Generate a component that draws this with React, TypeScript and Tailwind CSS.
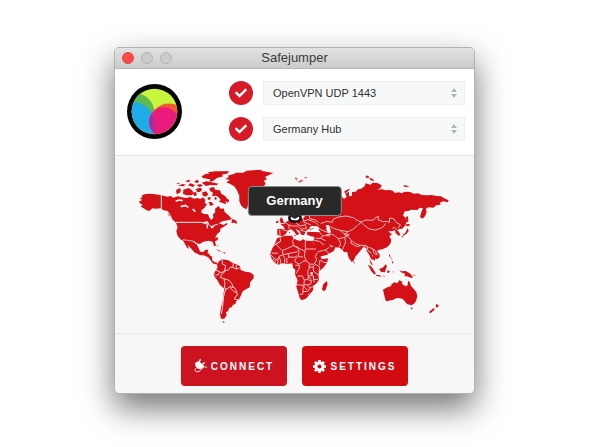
import { useState } from 'react';
import { FaCheck } from 'react-icons/fa';

function Logo() {
  return (
    <svg viewBox="80 147 164 164" className="size-[55px] shrink-0" role="img" aria-label="Safejumper">
      <defs>
        <clipPath id="disc"><circle cx="162" cy="229" r="68" /></clipPath>
        <clipPath id="blue"><circle cx="93" cy="270" r="71" /></clipPath>
      </defs>
      <circle cx="162" cy="229" r="82" fill="#050505" />
      <g clipPath="url(#disc)">
        <rect x="80" y="147" width="164" height="164" fill="#c9f53d" />
        <circle cx="105" cy="231" r="56" fill="#5fb94f" />
        <circle cx="205" cy="262" r="57" fill="#f0592b" />
        <circle cx="93" cy="270" r="71" fill="#20aceb" />
        <circle cx="190" cy="260" r="44" fill="#ea1b7c" />
        <circle cx="190" cy="260" r="44" fill="#b02a9c" clipPath="url(#blue)" />
      </g>
    </svg>
  );
}

function PlugIcon() {
  return (
    <svg viewBox="0 0 39 42" className="h-[14px] w-[13px]" fill="none" stroke="currentColor" aria-hidden="true">
      <path d="M4 11 L14 6 L30 20 C29 27 20 32 12 29 C4 25 2 17 4 11 Z" fill="currentColor" stroke="none" />
      <path d="M15 10 L19 2 M23 17 L31 11" strokeWidth="4" strokeLinecap="round" />
      <path d="M7 27 C0 33 4 40 13 38 C23 35 24 24 31 23 C34 23 34 26 39 25" strokeWidth="3" />
    </svg>
  );
}

function GearIcon() {
  return (
    <svg viewBox="0 0 40 40" className="size-[13px]" fill="none" stroke="currentColor" aria-hidden="true">
      <circle cx="20" cy="20" r="11" strokeWidth="9" />
      <path d="M20 0 V8 M20 32 V40 M0 20 H8 M32 20 H40 M6 6 L12 12 M28 28 L34 34 M34 6 L28 12 M12 28 L6 34" strokeWidth="8" />
    </svg>
  );
}

function WorldMap() {
  return (
    <svg viewBox="345 468 1077 531" className="block w-full" role="img" aria-label="World map">
      {/* North America and Greenland */}
      <g transform="translate(390 480)" fill="#d41116">
        <path d="M28 124 L37 120 29 115 37 112 36 106 46 102 62 101 76 103 95 106 112 110 122 108 130 113 143 109 156 112 168 114 181 111 192 116 202 114 211 117 219 112 226 119 224 129 231 132 224 143 215 150 214 158 223 162 234 163 239 174 244 180 250 173 249 163 256 157 255 147 265 138 273 147 281 145 284 156 291 162 300 170 306 178 293 181 277 184 265 191 273 191 280 195 292 188 291 194 280 201 271 206 271 214 261 223 255 234 264 231 263 240 255 244 258 257 252 258 248 245 235 242 220 245 209 252 201 250 191 243 178 243 166 243 154 240 143 228 139 214 143 202 138 188 127 178 121 164 113 153 101 151 92 145 77 146 67 145 58 153 50 151 40 144 32 140 38 134 29 130 Z" />
        <path d="M158 239 L173 242 188 244 200 253 207 266 210 275 220 276 226 269 235 269 231 279 238 281 240 287 247 290 246 300 254 307 263 308 260 312 250 311 241 300 235 292 221 286 211 286 193 277 182 264 172 254 177 266 171 263 Z" />
        <path d="M289 67 L300 60 286 57 297 51 292 47 309 43 319 38 340 38 350 32 371 31 390 29 400 34 430 39 417 45 405 51 411 57 402 62 407 71 399 82 385 97 365 111 357 130 350 147 342 145 333 136 328 124 328 107 321 91 312 78 299 71 Z" />
        <path d="M221 55 L214 50 225 43 239 40 233 37 256 34 277 34 298 34 291 41 275 44 280 49 261 54 248 64 238 65 241 58 Z M215 68 L229 64 252 68 266 71 259 76 240 75 228 78 Z M238 84 L251 81 257 90 270 91 274 101 286 109 292 117 298 120 294 128 286 123 289 133 276 128 267 125 272 119 265 111 257 107 246 109 249 98 240 93 Z M160 89 L176 84 186 91 191 99 185 106 170 106 159 102 Z M138 91 L149 84 153 91 150 98 140 103 Z M197 87 L211 83 217 89 210 96 202 97 Z M217 97 L229 94 235 104 226 110 217 106 Z M144 77 L158 72 168 74 160 79 Z M174 76 L181 70 195 75 189 81 Z M200 75 L211 72 219 77 208 81 Z M166 63 L178 59 181 64 173 67 Z M193 64 L203 59 207 66 199 70 Z M188 99 L197 95 201 105 193 109 Z M236 125 L246 127 251 135 240 137 Z M307 177 L319 182 322 191 312 188 304 189 Z M232 113 L241 110 242 118 235 120 Z M138 71 L146 68 149 72 Z M252 115 L257 111 261 116 257 120 Z" />
        <path d="M257 268 L267 271 277 275 266 273 Z M278 277 L288 278 283 281 Z M261 255 L265 257 263 260 Z M239 292 L243 294 242 298 Z M114 160 L120 165 118 170 Z M229 275 L234 273 233 279 Z" />
        <g fill="none" stroke="#f7f7f7" strokeWidth="3">
          <path d="M94 105 V146 M137 187 H215 L223 190 235 193 243 200 252 196 263 193" />
          <path d="M220 188 L232 186 236 193 M232 194 V205 M243 204 L252 200" strokeWidth="4" />
          <path d="M137 124 L147 120 158 122 M152 140 L166 136 175 142 M188 147 L196 155" strokeWidth="5" />
          <path d="M158 239 L173 241 188 243 200 251" strokeWidth="2" />
        </g>
      </g>

      {/* South America */}
      <g transform="translate(480 705)" fill="#d41116">
        <path d="M164 82 L173 86 177 79 187 73 205 76 218 84 229 88 240 94 242 105 256 110 269 112 281 119 281 130 271 141 269 157 258 163 248 169 242 183 237 193 229 198 226 207 218 210 216 216 207 219 205 228 198 232 200 241 193 251 183 251 180 238 183 218 188 200 190 180 193 161 180 150 172 136 162 122 164 111 172 100 172 91 Z" />
        <path d="M187 258 L195 261 190 263 Z" />
        <g fill="none" stroke="#f7f7f7" strokeWidth="2.5">
          <path d="M187 74 L187 87 197 92 194 107 205 105 212 96 219 98 220 85 M220 98 L228 102 239 99 M229 89 V101 M165 105 L177 109 183 113 195 108 M166 121 L176 119 178 112" />
          <path d="M195 109 L184 120 181 127 192 131 207 136 216 147 219 156 225 160 230 170 232 181 227 184 223 192 235 195 M192 132 L195 145 193 158 201 163 208 155 219 157 M210 158 L222 170 230 172 M197 162 L191 184 188 214 184 237" />
        </g>
      </g>

      {/* Europe and Asia */}
      <g transform="translate(1020 480)" fill="#d41116">
        <path d="M-188 207 L-177 206 -165 208 -170 199 -179 193 -167 191 -160 185 -151 179 -143 174 -141 165 -80 155 -70 110 -40 112 -30 104 5 109 12 117 20 111 16 100 27 96 27 109 36 108 36 96 47 95 54 88 64 86 74 79 77 70 91 74 98 68 112 69 125 76 121 85 112 89 127 88 136 91 148 90 158 92 165 99 177 97 185 100 194 95 211 96 221 101 233 100 246 105 262 106 275 105 289 108 303 109 312 115 326 121 323 127 311 124 301 127 301 134 289 136 280 143 265 142 257 147 260 156 255 169 247 176 240 170 245 154 249 145 239 143 232 150 213 149 205 153 194 154 189 167 197 173 201 183 196 196 187 206 177 207 173 211 181 223 176 228 167 219 165 211 154 214 145 214 151 220 157 222 148 229 154 240 151 251 141 262 127 268 118 269 111 273 119 284 119 292 110 298 103 291 96 284 97 301 92 295 87 283 80 274 79 264 70 261 65 268 55 280 46 290 41 302 35 306 26 293 21 275 13 277 7 270 0 264 -20 260 -34 251 -43 240 -32 253 -27 261 -14 261 -18 272 -38 284 -61 290 -69 277 -76 261 -81 244 -75 231 -87 229 -99 224 -98 215 -78 216 -59 217 -65 207 -75 204 -88 209 -95 207 -101 212 -108 225 -115 225 -122 213 -134 205 -127 216 -121 221 -130 226 -137 216 -147 207 -157 212 -163 222 -172 229 -178 227 -188 224 Z" />
        <path d="M-181 177 L-174 172 -170 184 -166 189 -178 190 Z M-191 183 L-184 182 -186 189 -192 189 Z M-140 226 L-132 226 -134 229 Z M-80 231 L-72 229 -76 233 Z M-153 216 L-150 216 -150 223 Z M198 170 L204 169 205 187 200 186 Z M197 193 L209 192 208 198 200 199 Z M203 204 L206 213 200 221 192 226 187 229 190 223 196 219 Z M184 228 L189 228 187 233 Z M143 252 L148 250 146 258 Z M76 47 L85 47 88 52 80 55 Z M87 53 L99 57 103 63 92 61 Z M190 75 L202 77 208 80 194 81 Z M12 95 L21 89 31 86 25 93 16 100 Z M39 305 L44 306 43 311 Z" />
        <path d="M-135 52 L-127 55 -131 60 -124 65 -117 59 -109 61 -116 65 -122 68 -133 59 Z M-108 51 L-98 52 -103 56 Z" opacity=".75" />
        <g fill="none" stroke="#f4d8d8" strokeWidth="2.5" strokeLinejoin="round">
          <path d="M-58 191 L-40 184 -23 187 -20 177 -4 171 18 168 40 173 51 181 63 186 78 180 90 181 101 180 106 173 116 169 114 179 128 185 139 184 148 187 149 174 161 176 168 187 181 194 174 205" />
          <path d="M63 187 L73 196 88 207 107 210 122 205 130 200 137 190 M63 187 L52 197 40 207 24 215 13 224 M24 215 L0 211 -20 205 -28 200 -40 204 -41 211 M0 211 L12 221 28 224 14 232 -5 236 -22 223 -41 224 M13 224 L25 231 34 241 43 249 60 256 75 256 85 262 M-5 236 L2 252 -4 263 M14 232 L17 246 7 269 M34 241 L33 250 49 259 60 258 M75 256 L70 263 M80 259 L84 272 96 280 M86 262 L98 266 106 272 112 286 M98 266 L103 281 110 284 M157 205 L164 202 172 211" />
          <path d="M-61 217 L-52 227 -58 235 -73 235 M-58 235 L-43 242 M-52 227 L-39 227 -29 228 M-78 241 L-62 244 -48 255 M-67 275 L-44 270 -38 275 -34 282 M-44 270 L-32 262 M-60 208 L-40 216 -27 216" />
          <path d="M-181 209 L-180 225 M-174 209 L-157 213 M-163 189 L-153 195 -153 207 M-153 195 L-143 198 -127 198 M-128 175 L-130 191 -117 198 -104 194 M-127 198 L-117 207 -104 206 M-104 194 L-101 208 M-110 176 L-108 187 -97 191 -87 194 M-109 183 L-95 179 -83 184 -75 186 -65 196 M-119 211 L-101 215 M-93 164 L-90 177 -75 179 -64 188" />
        </g>
        <path d="M-91 202 L-84 197 -77 199 -69 198 -59 206 -68 208 -80 205 -92 208 Z M-43 195 L-34 195 -30 205 -27 216 -32 222 -38 216 -39 205 Z M-113 166 L-101 160 -92 162 -104 167 -112 176 -124 176 Z" fill="#f7f7f7" />
      </g>

      {/* Africa */}
      <g transform="translate(780 675)" fill="#d41116">
        <path d="M52 39 L62 36 76 32 97 32 99 40 112 46 122 48 128 43 140 47 158 48 163 60 170 76 181 94 186 103 204 100 202 112 190 128 177 139 175 150 177 164 170 175 160 182 159 196 148 210 137 221 125 226 119 219 114 200 109 185 113 166 105 148 106 134 99 128 97 115 82 117 66 115 55 119 42 112 34 99 31 86 37 70 44 57 Z" />
        <path d="M200 168 L203 176 197 194 191 199 186 193 190 178 Z" />
        <path d="M60 34 L62 49 46 58 34 69 M48 58 L67 77 70 89 57 94 56 102 47 103 33 91 M35 84 L54 85 M67 77 L83 70 100 62 98 47 102 41 M62 48 L48 58 M100 62 L113 66 117 80 115 95 105 103 105 110 M71 89 L84 86 87 96 80 103 81 116 M84 86 L113 80 M86 96 L104 97 111 92 M69 91 L75 100 73 116 M57 97 L62 105 61 116 M102 63 L135 79 136 71 136 45 M137 72 H168 M135 80 L133 94 139 107 148 117 162 118 170 105 166 94 172 83 M117 95 L129 96 M105 111 L118 117 131 108 139 108 M106 121 L118 120 M118 120 L117 132 108 145 M148 118 L147 132 143 140 145 155 154 162 M147 127 L159 125 161 139 174 149 M160 125 L167 118 179 126 177 139 M182 105 L191 112 202 113 M180 105 L178 121 M113 153 L127 153 133 165 144 163 146 154 M110 179 L128 181 142 179 M133 165 L132 180 M145 165 L154 166 153 176 142 180 150 188 159 185 M145 155 L153 151 160 153 161 164 175 163 M160 154 L162 172 M130 182 L128 207 119 209 M129 200 L143 199 151 189 M130 183 L142 195 M144 210 L149 205 M46 104 L44 113 M54 104 L53 117 M42 101 L39 106" fill="none" stroke="#f7dede" strokeWidth="2.5" />
        <path d="M152 141 L159 142 158 149 151 148 Z" fill="#f7f7f7" />
      </g>

      {/* Oceania */}
      <g transform="translate(1050 705)" fill="#d41116">
        <path d="M99 164 L112 157 123 154 125 147 134 142 142 145 148 136 157 140 156 147 167 154 173 151 174 137 179 141 183 153 192 163 199 172 202 184 198 198 192 206 184 211 171 207 165 200 161 194 152 190 140 189 128 195 108 199 104 187 Z" />
        <path d="M181 218 L189 218 185 224 Z M259 207 L264 209 267 214 259 218 257 213 Z M250 220 L255 222 247 230 241 235 237 231 Z" />
        <path d="M54 89 L62 93 70 103 78 117 72 118 63 107 Z M87 102 L98 98 107 88 111 93 107 103 105 112 94 111 Z M112 106 L120 108 116 114 112 113 Z M148 106 L156 109 167 108 179 115 189 126 185 129 171 124 164 124 165 116 153 112 Z M77 119 L90 121 95 125 80 123 Z M117 57 L121 62 117 67 Z M125 79 L131 81 127 86 Z M58 71 L64 81 69 92 62 86 Z M67 62 L77 65 75 77 62 70 66 68 Z" />
        <path d="M98 122 L105 124 M119 63 L127 75 M130 108 V113 M188 120 L197 121" fill="none" stroke="#e78787" strokeWidth="3" />
      </g>

      {/* marker for the current location */}
      <ellipse cx="885" cy="654" rx="17" ry="11" fill="#fff" stroke="#151515" strokeWidth="8" />
    </svg>
  );
}

type PickerProps = {
  label: string;
  options: string[];
};

function Picker({ label, options }: PickerProps) {
  const [value, setValue] = useState(options[0]);

  return (
    <div className="flex items-center gap-[10px]">
      <span className="flex size-6 shrink-0 items-center justify-center rounded-full bg-[#d61a28] text-white">
        <FaCheck className="size-3" aria-hidden="true" />
      </span>
      <div className="relative flex-1">
        <select
          aria-label={label}
          value={value}
          onChange={(e) => setValue(e.target.value)}
          className="block h-6 w-full appearance-none border border-[#edf0f0] bg-[#f7f9f9] px-[9px] text-[11px] text-[#303030]"
        >
          {options.map((option) => (
            <option key={option}>{option}</option>
          ))}
        </select>
        <svg viewBox="0 0 6 10" className="pointer-events-none absolute top-[7px] right-2 h-[10px] w-[6px]" fill="#a9b9b7" aria-hidden="true">
          <path d="M3 0 L6 4 H0 Z M0 6 H6 L3 10 Z" />
        </svg>
      </div>
    </div>
  );
}

export default function App() {
  return (
    <main className="min-h-screen bg-white pt-[47px] pr-[121px] pb-[53px] pl-[114px] font-['Liberation_Sans',Arial,sans-serif]">
      <section className="overflow-hidden rounded-[5px] border border-[#b3b3b3] bg-[#f7f7f7] shadow-[0_14px_32px_rgba(0,0,0,0.55)]">
        <header className="grid h-[21px] grid-cols-[1fr_auto_1fr] items-center border-b border-[#b8b8b8] bg-linear-to-b from-[#e2e2e2] to-[#cbcbcb] px-[7px]">
          <div className="flex gap-[7px]">
            <button aria-label="Close" className="size-3 rounded-full border border-[#df4744] bg-[#fc4948]" />
            <button aria-label="Minimize" className="size-3 rounded-full border border-[#b4b4b4] bg-[#cbcbcb]" />
            <button aria-label="Zoom" className="size-3 rounded-full border border-[#b4b4b4] bg-[#cbcbcb]" />
          </div>
          <h1 className="text-[13px] leading-5 text-[#3c3c3c]">Safejumper</h1>
        </header>

        <div className="flex items-center justify-between border-b border-[#e4e4e4] bg-white pt-3 pr-[9px] pb-[14px] pl-3">
          <Logo />
          <div className="flex w-[236px] flex-col gap-3">
            <Picker label="Protocol" options={['OpenVPN UDP 1443']} />
            <Picker label="Location" options={['Germany Hub']} />
          </div>
        </div>

        <div className="relative">
          <WorldMap />
          <div className="absolute top-[17%] left-1/2 -translate-x-1/2 rounded-[4px] border border-[#8c8c8c] bg-[#292929] px-[18px] py-1 text-[13px] leading-5 font-bold text-white">
            Germany
            <svg viewBox="0 0 14 4" className="absolute top-full left-1/2 h-1 w-[14px] -translate-x-1/2" fill="#292929" aria-hidden="true">
              <path d="M0 0 H14 L7 4 Z" />
            </svg>
          </div>
        </div>

        <footer className="flex justify-center gap-[15px] border-t border-[#e8e8e8] pt-3 pb-[7px] text-[10px] font-bold tracking-[2px] text-white">
          <button className="flex h-10 w-[106px] items-center justify-center gap-1 rounded-[4px] bg-[#cd131f]">
            <PlugIcon />
            CONNECT
          </button>
          <button className="flex h-10 w-[106px] items-center justify-center gap-1 rounded-[4px] bg-[#d20b12]">
            <GearIcon />
            SETTINGS
          </button>
        </footer>
      </section>
    </main>
  );
}
